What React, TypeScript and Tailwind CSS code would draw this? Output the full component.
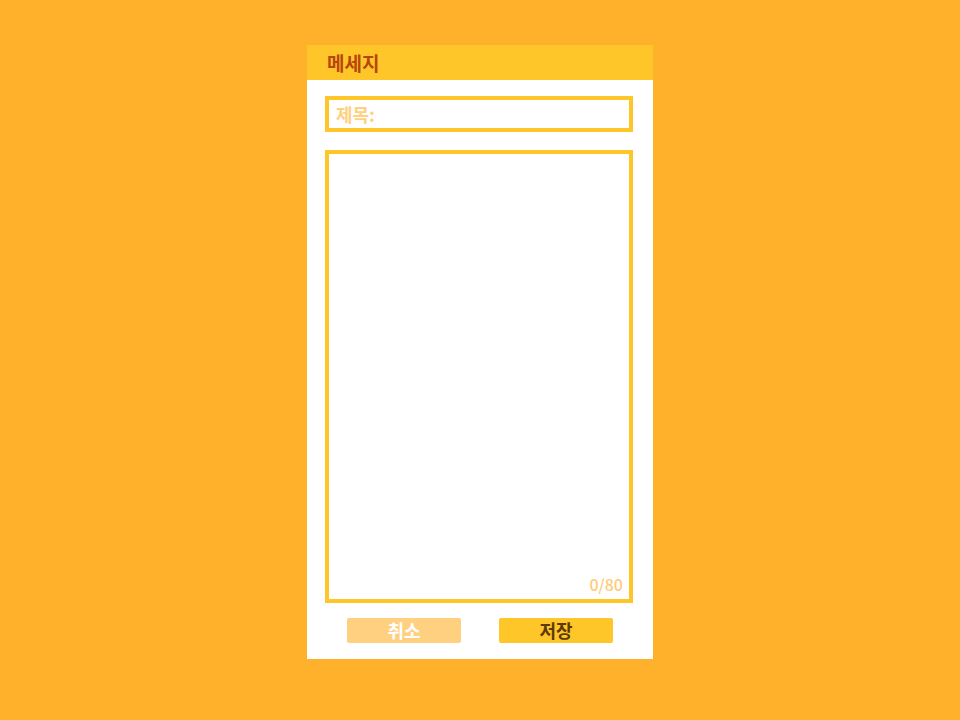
const App = () => {
  return (
    <div
      className="w-[960px] h-[720px] bg-[#ffb12b] flex justify-center pt-[45px]"
      style={{ fontFamily: '"Noto Sans CJK KR", "Noto Sans", sans-serif' }}
    >
      <div className="w-[346px] h-[614px] bg-white flex flex-col">
        <div className="h-[35px] bg-[#ffc629] flex items-center pl-[20px]">
          <span className="text-[19px] font-bold text-[#b8460c] leading-none">메세지</span>
        </div>
        <div className="flex flex-col pl-[18px] pt-[16px]">
          <div className="w-[308px] h-[36px] border-[4px] border-[#ffc629] flex items-center pl-[7px]">
            <span className="text-[18px] font-bold text-[#ffd07e] leading-none">제목:</span>
          </div>
          <div className="w-[308px] h-[453px] mt-[18px] border-[4px] border-[#ffc629] flex items-end justify-end pr-[6px] pb-[7px]">
            <span className="text-[16px] font-medium text-[#ffcb7a] leading-none">0/80</span>
          </div>
        </div>
        <div className="flex pl-[40px] pt-[15px] gap-[38px]">
          <div className="w-[114px] h-[25px] bg-[#ffd080] rounded-[2px] flex items-center justify-center pb-[2px]">
            <span className="text-[18px] font-bold text-white leading-none">취소</span>
          </div>
          <div className="w-[114px] h-[25px] bg-[#ffc629] rounded-[2px] flex items-center justify-center pb-[2px]">
            <span className="text-[18px] font-bold text-[#5c3a06] leading-none">저장</span>
          </div>
        </div>
      </div>
    </div>
  );
};

export default App;
